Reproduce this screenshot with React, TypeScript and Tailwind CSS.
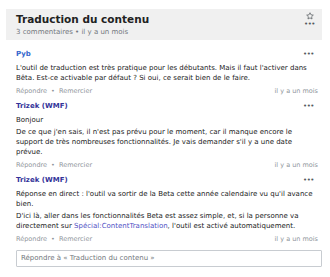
import React from "react";

type Comment = {
  author: string;
  authorColor: string;
  paragraphs: React.ReactNode[];
};

const comments: Comment[] = [
  {
    author: "Pyb",
    authorColor: "text-[#3366cc]",
    paragraphs: [
      "L'outil de traduction est très pratique pour les débutants. Mais il faut l'activer dans Bêta. Est-ce activable par défaut ? Si oui, ce serait bien de le faire.",
    ],
  },
  {
    author: "Trizek (WMF)",
    authorColor: "text-[#333399]",
    paragraphs: [
      "Bonjour",
      "De ce que j'en sais, il n'est pas prévu pour le moment, car il manque encore le support de très nombreuses fonctionnalités. Je vais demander s'il y a une date prévue.",
    ],
  },
  {
    author: "Trizek (WMF)",
    authorColor: "text-[#333399]",
    paragraphs: [
      "Réponse en direct : l'outil va sortir de la Beta cette année calendaire vu qu'il avance bien.",
      <>
        D'ici là, aller dans les fonctionnalités Beta est assez simple, et, si la personne va
        directement sur <a className="text-[#4f4fc4]">Spécial:ContentTranslation</a>, l'outil est
        activé automatiquement.
      </>,
    ],
  },
];

function Dots() {
  return (
    <span className="text-[7px] leading-[7px] tracking-[-0.5px] text-[#54595d]">•••</span>
  );
}

function StarIcon() {
  return (
    <svg width="8" height="8" viewBox="0 0 20 20" fill="none" stroke="#54595d" strokeWidth="1.8">
      <path d="M10 1.8l2.5 5.3 5.8.7-4.3 4 1.1 5.7L10 14.7l-5.1 2.8 1.1-5.7-4.3-4 5.8-.7z" strokeLinejoin="round" />
    </svg>
  );
}

function CommentItem({ c }: { c: Comment }) {
  return (
    <div className="mt-[6px] first:mt-[9px]">
      <div className="flex items-center justify-between pr-[8px]">
        <span className={`text-[7px] leading-[11px] font-bold ${c.authorColor}`}>{c.author}</span>
        <Dots />
      </div>
      {c.paragraphs.map((p, i) => (
        <p
          key={i}
          className={`${i === 0 ? "mt-[3px]" : "mt-[2px]"} text-[7px] leading-[10px] text-[#222222] pr-[4px]`}
        >
          {p}
        </p>
      ))}
      <div className="mt-[4px] flex items-center justify-between text-[6.5px] leading-[8px] text-[#8f959b] pr-[4px]">
        <span>
          Répondre<span className="mx-[4px]">•</span>Remercier
        </span>
        <span>il y a un mois</span>
      </div>
    </div>
  );
}

export default function App() {
  return (
    <div className="w-[330px] h-[277px] bg-white pt-[9px] pl-[6px] pr-[8px] font-['DejaVu_Sans',sans-serif] overflow-hidden">
      <div className="h-[31px] bg-[#f0f0f0] pl-[10px] pr-[7px] flex justify-between">
        <div className="pt-[3px]">
          <div className="text-[10.5px] leading-[14px] font-bold text-[#222222]">Traduction du contenu</div>
          <div className="mt-[1px] text-[7px] leading-[10px] text-[#72777d]">3 commentaires • il y a un mois</div>
        </div>
        <div className="pt-[3px] flex flex-col items-center gap-[1px]">
          <StarIcon />
          <Dots />
        </div>
      </div>
      <div className="pl-[10px]">
        {comments.map((c, i) => (
          <CommentItem key={i} c={c} />
        ))}
        <div className="mt-[7px] h-[17px] border border-[#c8ccd1] rounded-[1px] flex items-center px-[4px] text-[7px] text-[#72777d]">
          Répondre à « Traduction du contenu »
        </div>
      </div>
    </div>
  );
}
